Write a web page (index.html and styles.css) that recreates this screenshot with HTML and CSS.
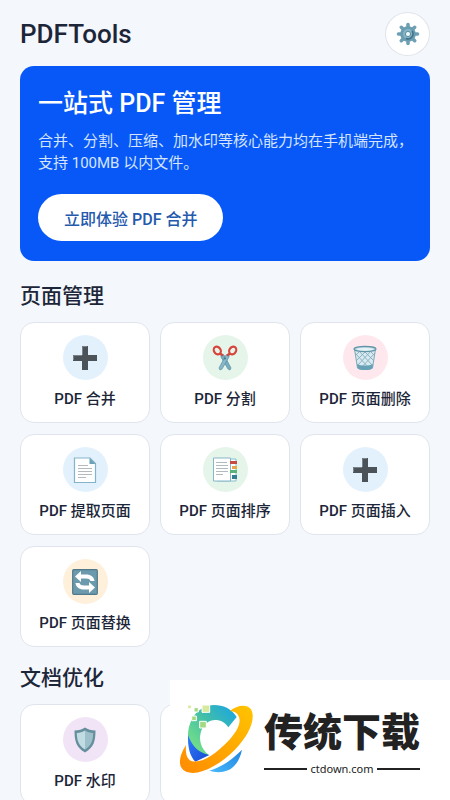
FILE: index.html
```html
<!DOCTYPE html>
<html lang="zh-CN">
<head>
<meta charset="utf-8">
<meta name="viewport" content="width=device-width, initial-scale=1">
<title>PDFTools</title>
<link rel="stylesheet" href="styles.css">
</head>
<body>
<svg class="defs" aria-hidden="true">
  <defs>
    <symbol id="plus" viewBox="0 0 26 26">
      <path fill="#4c5358" d="M10 1h6v9h9v6h-9v9h-6v-9H1v-6h9z"/>
      <path fill="none" stroke="#7b8388" d="M10.500 10V1.500H15M1.500 15v-4.500H10"/>
    </symbol>
  </defs>
</svg>
<main class="app">
  <header class="topbar">
    <h1 class="brand">PDFTools</h1>
    <button class="settings" type="button" aria-label="设置">
      <svg width="24" height="24" viewBox="0 0 24 24">
        <g stroke="#6f9fb2" stroke-width="3.600" stroke-linecap="round"><path d="M12 2.500v19M2.500 12h19M5.300 5.300l13.400 13.400M18.700 5.300L5.300 18.700"/></g>
        <circle cx="12" cy="12" r="7.800" fill="#6a9db1"/>
        <circle cx="12" cy="12" r="5" fill="#86b5c7"/>
        <path d="M16 9a5 5 0 0 1-6 7.500" fill="none" stroke="#3f7187" stroke-width="1.500"/>
        <circle cx="12" cy="12" r="2.600" fill="#eef7fa" stroke="#5c8ea2"/>
      </svg>
    </button>
  </header>

  <section class="hero">
    <h2 class="hero-title">一站式 PDF 管理</h2>
    <p class="hero-text">合并、分割、压缩、加水印等核心能力均在手机端完成，支持 100MB 以内文件。</p>
    <button class="hero-action" type="button">立即体验 PDF 合并</button>
  </section>

  <section class="group">
    <h2 class="group-title">页面管理</h2>
    <div class="cards">
      <button class="card" type="button"><span class="disc blue"><svg width="26" height="26"><use href="#plus"/></svg></span>PDF 合并</button>
      <button class="card" type="button"><span class="disc green">
        <svg width="26" height="26" viewBox="0 0 26 26">
          <path fill="#78adc0" stroke="#568ea3" stroke-width=".7" d="M9 9l3 1 7 13-1 2-2-1-7-12z"/>
          <path fill="#8ab8c8" stroke="#568ea3" stroke-width=".7" d="M17 9l-3 1-7 13 1 2 2-1 7-12z"/>
          <circle cx="13" cy="13.500" r="1" fill="#3e7287"/>
          <g fill="none" stroke="#d8443c" stroke-width="2.200"><ellipse cx="5.300" cy="5.500" rx="3.300" ry="4" transform="rotate(-35 5.300 5.500)"/><ellipse cx="20.700" cy="5.500" rx="3.300" ry="4" transform="rotate(35 20.700 5.500)"/><path d="M8 8.500l3 2M18 8.500l-3 2"/></g>
        </svg></span>PDF 分割</button>
      <button class="card" type="button"><span class="disc pink">
        <svg width="26" height="26" viewBox="0 0 26 26">
          <path fill="#d8e9f0" stroke="#7ba9ba" d="M2.500 4l3 19c3 2 12 2 15 0l3-19z"/>
          <path fill="none" stroke="#82afc0" stroke-width=".9" d="M3 8l15 16M7 6l14 15M12 6l10 10M18 6l5 5M23 8L8 24M19 6L5 21M14 6L4 16M8 6l-5 5"/>
          <path fill="#66a1b5" d="M5 19c4 2 12 2 16 0l-.7 4.500c-3 2-11.600 2-14.600 0z"/>
          <ellipse cx="13" cy="4" rx="11" ry="2.700" fill="#bad6e0" stroke="#6294a7" stroke-width="1.200"/>
          <ellipse cx="13" cy="4.300" rx="8.500" ry="1.400" fill="#e8f3f7"/>
        </svg></span>PDF 页面删除</button>
      <button class="card" type="button"><span class="disc blue">
        <svg width="26" height="26" viewBox="0 0 26 26">
          <path fill="#fff" stroke="#83b4c9" stroke-width="1.200" d="M2.500 1h15.500l5.500 5.500V25.500h-21z"/>
          <path fill="#6da1b6" d="M17.500 1l6 6h-6z"/>
          <path stroke="#b3babd" stroke-width="1.100" d="M6 8.500h10M6 11.500h14M6 14.500h14M6 17.500h14M6 20.500h8"/>
        </svg></span>PDF 提取页面</button>
      <button class="card" type="button"><span class="disc green">
        <svg width="26" height="26" viewBox="0 0 26 26">
          <path fill="#fff" stroke="#88bed0" d="M5 2h19v22H5z"/>
          <path fill="#fff" stroke="#88b5c8" d="M1.500 1h17v23h-17z"/>
          <path stroke="#b1babd" d="M4 5.500h11M4 8.500h12M4 11.500h12M4 14.500h12M4 17.500h7"/>
          <path fill="#c54b45" d="M18 4h7v3h-7z"/><path fill="#e7a54d" d="M20 9h5v3h-5z"/><path fill="#5bb37a" d="M18 13h7v3h-7z"/><path fill="#347e94" d="M20 18h5v4h-5z"/>
        </svg></span>PDF 页面排序</button>
      <button class="card" type="button"><span class="disc blue"><svg width="26" height="26"><use href="#plus"/></svg></span>PDF 页面插入</button>
      <button class="card" type="button"><span class="disc orange">
        <svg width="26" height="26" viewBox="0 0 26 26">
          <rect x=".7" y=".7" width="24.600" height="24.600" rx="1" fill="#6c9aad" stroke="#507a8b" stroke-width="1.200"/>
          <path fill="#fff" d="M3 7.500l6-5.500v3.500h5c5 0 8 2.500 8.500 6.500h-4C18 10.300 16.500 9.500 14 9.500H9V13zM23 18.500l-6 5.500v-3.500h-5c-5 0-8-2.500-8.500-6.500h4c.5 1.700 2 2.500 4.500 2.500h5V13z"/>
        </svg></span>PDF 页面替换</button>
    </div>
  </section>

  <section class="group">
    <h2 class="group-title">文档优化</h2>
    <div class="cards">
      <button class="card" type="button"><span class="disc purple">
        <svg width="26" height="26" viewBox="0 0 26 26">
          <path fill="#668f9d" d="M13 .5c3 2 6 3 10.500 3 0 10-1.500 17-10.500 22C4 20.500 2.500 13.500 2.500 3.500 7 3.500 10 2.500 13 .5z"/>
          <path fill="#c2dce3" d="M13 3.500v19C6.500 18.500 5 13.500 4.800 6 8 5.800 10.500 5 13 3.500z"/>
          <path fill="#9dc0cb" d="M13 3.500v19c6.500-4 8-9 8.200-16.500C18 5.800 15.500 5 13 3.500z"/>
        </svg></span>PDF 水印</button>
      <div class="card"></div>
    </div>
  </section>
</main>

<aside class="badge">
  <svg class="badge-logo" width="78" height="74" viewBox="24 84 234 222" aria-hidden="true">
    <defs>
      <linearGradient id="sweep" x1="0" y1="1" x2="1" y2="0"><stop offset=".2" stop-color="#6fdc8a"/><stop offset=".55" stop-color="#43bfa8"/><stop offset="1" stop-color="#16a3e6"/></linearGradient>
      <linearGradient id="ring" x1="1" y1="0" x2="0" y2="1"><stop offset="0" stop-color="#ffc400"/><stop offset="1" stop-color="#ff8a00"/></linearGradient>
      <linearGradient id="tail" x1="0" y1="1" x2="1" y2="0"><stop offset="0" stop-color="#45b9fb"/><stop offset="1" stop-color="#2484df"/></linearGradient>
      <linearGradient id="deep" x1="0" y1="0" x2="1" y2="1"><stop offset="0" stop-color="#2e7bff"/><stop offset="1" stop-color="#1749cf"/></linearGradient>
    </defs>
    <path fill="url(#sweep)" d="M200 129C184 104 160 93 132 93C84 95 54 136 54 188C55 214 65 238 80 256L116 242C98 230 90 210 90 190C92 160 108 140 134 138C154 138 166 146 175 160Z"/>
    <path fill="url(#deep)" d="M54 183C53 219 59 246 76 263L118 243C86 237 66 216 54 183Z"/>
    <path fill="url(#tail)" d="M118 290C154 280 190 254 216 227C209 260 193 281 174 289C153 297 135 295 118 290Z"/>
    <path fill="url(#ring)" d="M180 111C199 94 230 88 243 106C259 135 236 185 194 228C153 270 91 305 55 295C21 285 24 251 48 213C46 239 50 258 67 262C99 268 139 238 174 202C202 173 215 145 206 127C201 115 191 112 180 111Z"/>
    <g stroke="#fff" stroke-width="3"><path fill="#d6e99c" d="M96 93h23v22H96zM53 93h11v11H53z"/><path fill="#a4d982" d="M72 101h13v13H72zM65 126h14v14H65zM89 142h20v20H89z"/></g>
  </svg>
  <div class="badge-words">
    <strong class="badge-name">传统下载</strong>
    <span class="badge-site">ctdown.com</span>
  </div>
</aside>
</body>
</html>
```

FILE: styles.css
```css
* { box-sizing: border-box; }

body {
  margin: 0;
  height: 100vh;
  overflow: hidden;
  background: #f4f7fc;
  color: #1c2638;
  font-family: Roboto, "Noto Sans CJK SC", sans-serif;
}

h1, h2, p { margin: 0; }

button { font-family: inherit; color: inherit; cursor: pointer; }

.defs { position: absolute; width: 0; height: 0; }

.app { padding: 12px 20px; }

.topbar {
  display: flex;
  align-items: center;
  justify-content: space-between;
  margin-bottom: 10px;
}

.brand { font-size: 26px; line-height: 32px; font-weight: 500; }

.settings {
  display: grid;
  place-items: center;
  width: 45px;
  height: 44px;
  padding: 0;
  border: 1px solid #e0e4ea;
  border-radius: 50%;
  background: #fff;
}

.hero {
  padding: 20px 12px 20px 18px;
  margin-bottom: 20px;
  border-radius: 14px;
  background: #0858f7;
  color: #fff;
}

.hero-title { font-size: 25px; line-height: 36px; font-weight: 500; }

.hero-text {
  margin: 8px 0 20px;
  font-size: 15px;
  line-height: 22px;
  color: #d5e5ff;
}

.hero-action {
  display: block;
  height: 47px;
  padding: 0 26px;
  border: 0;
  border-radius: 24px;
  background: #fff;
  color: #2459ac;
  font-size: 16px;
  font-weight: 500;
}

.group { margin-bottom: 16px; }

.group-title { font-size: 21px; line-height: 30px; font-weight: 500; }

.cards {
  display: grid;
  grid-template-columns: repeat(3, 1fr);
  gap: 11px 10px;
  margin-top: 11px;
}

.card {
  display: flex;
  flex-direction: column;
  align-items: center;
  gap: 8px;
  min-height: 101px;
  padding: 12px 4px;
  border: 1px solid #e0e4ec;
  border-radius: 14px;
  background: #fff;
  font-size: 15px;
  line-height: 22px;
  font-weight: 500;
  white-space: nowrap;
}

.disc {
  display: grid;
  place-items: center;
  width: 45px;
  height: 45px;
  border-radius: 50%;
}

.blue { background: #e3f1fd; }
.green { background: #e5f5e9; }
.pink { background: #fee8ed; }
.orange { background: #fff0dc; }
.purple { background: #f1e4f6; }

.badge {
  position: fixed;
  right: 0;
  bottom: 0;
  display: flex;
  align-items: flex-start;
  gap: 8px;
  padding: 22px 30px 24px 8px;
  background: #fff;
  color: #222;
}

.badge-logo { flex: none; }

.badge-words { display: grid; gap: 6px; }

.badge-name {
  font-family: "Noto Sans CJK SC", sans-serif;
  font-size: 39px;
  line-height: 54px;
  font-weight: 900;
}

.badge-site {
  display: flex;
  align-items: center;
  gap: 3px;
  font-family: "Noto Sans", sans-serif;
  font-size: 11px;
  line-height: 14px;
}

.badge-site::before,
.badge-site::after {
  content: "";
  flex: 1;
  height: 2px;
  background: #222;
}
```
